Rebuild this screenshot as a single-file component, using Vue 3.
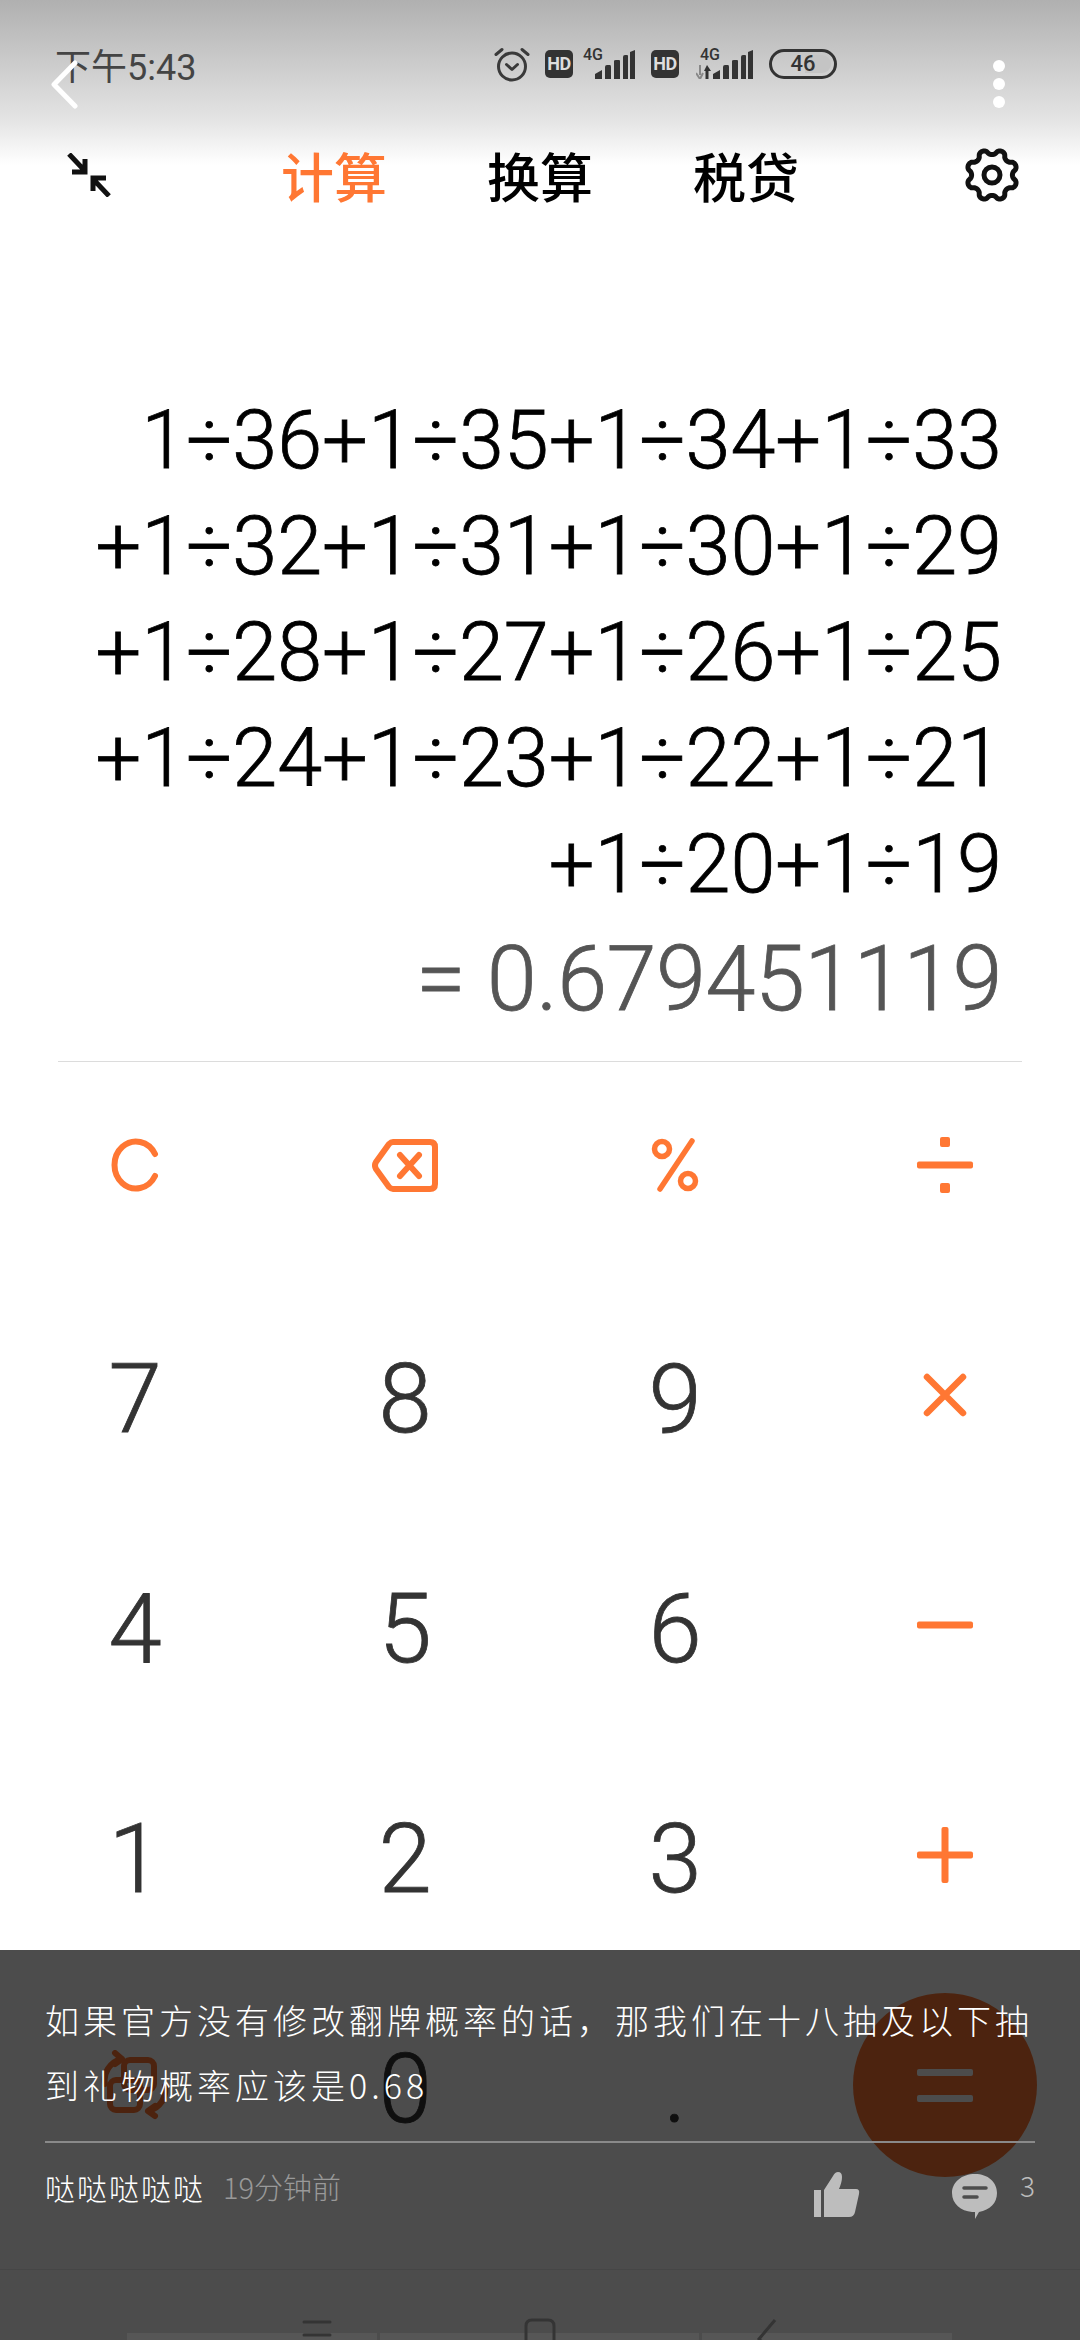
<script setup>
const lines = [
  "1÷36+1÷35+1÷34+1÷33",
  "+1÷32+1÷31+1÷30+1÷29",
  "+1÷28+1÷27+1÷26+1÷25",
  "+1÷24+1÷23+1÷22+1÷21",
  "+1÷20+1÷19",
];

const tabs = [
  { name: "计算", active: true },
  { name: "换算", active: false },
  { name: "税贷", active: false },
];

// 8 lobes, a dip straight up at the top
function gearPath() {
  const pts = [];
  for (let i = 0; i < 160; i++) {
    const a = (i / 160) * Math.PI * 2;
    const c = -Math.cos(8 * a);
    const r = 23 + 2.6 * Math.sign(c) * Math.pow(Math.abs(c), 0.6);
    pts.push((30 + r * Math.cos(a)).toFixed(2) + " " + (30 + r * Math.sin(a)).toFixed(2));
  }
  return "M" + pts.join("L") + "Z";
}
const gear = gearPath();
</script>

<template>
  <div class="phone">
    <div class="top">
      <div class="status">
        <span class="time">下午5:43</span>
        <div class="status__icons">
          <svg class="alarm" width="36" height="35" viewBox="0 0 36 35" fill="none" stroke="#3a3a3a" stroke-width="3" stroke-linecap="round" stroke-linejoin="round">
            <circle cx="18" cy="19.5" r="13.5" />
            <path d="M12.5 17.5 18 22.5l5.5-5M2 7.5 8 2.5M34 7.5 28 2.5" />
          </svg>
          <span class="hd">HD</span>
          <div class="net">
            <span class="net__g">4G</span>
            <svg width="40" height="29" viewBox="0 0 40 29" fill="#333">
              <path d="M0 29V24L7 20V29ZM10 29V17Q10 15 12 15H15Q16 15 16 17V29ZM19 29V11Q19 10 21 10H24Q25 10 25 11V29ZM28 29V7Q28 5 30 5H32Q33 5 33 6V29ZM35 29V2L40 0V29Z" />
            </svg>
          </div>
          <span class="hd hd--two">HD</span>
          <div class="net net--two">
            <span class="net__g">4G</span>
            <svg class="net__arrows" width="15" height="14" viewBox="0 0 15 14">
              <path d="M4 0V10M0 8 4 14 7 8" stroke="#888" stroke-width="2" fill="none" />
              <path d="M11 14V4" stroke="#333" stroke-width="3" fill="none" />
              <path d="M8 6 11 0 15 6Z" fill="#333" />
            </svg>
            <svg width="40" height="29" viewBox="0 0 40 29" fill="#333">
              <path d="M0 29V24L7 20V29ZM10 29V17Q10 15 12 15H15Q16 15 16 17V29ZM19 29V11Q19 10 21 10H24Q25 10 25 11V29ZM28 29V7Q28 5 30 5H32Q33 5 33 6V29ZM35 29V2L40 0V29Z" />
            </svg>
          </div>
          <div class="battery">
            <div class="battery__fill"></div>
            <span class="battery__num">46</span>
          </div>
        </div>
      </div>

      <div class="tabbar">
        <svg class="collapse" width="44" height="44" viewBox="0 0 44 44" fill="none" stroke="#111" stroke-width="5">
          <path d="M2 1 18 18M18 6V19H5" />
          <path d="M42 43 26 26M26 38V25H39" />
        </svg>
        <div class="tabs">
          <span v-for="t in tabs" :key="t.name" class="tab" :class="{ 'tab--on': t.active }">{{ t.name }}</span>
        </div>
        <svg class="gear" width="60" height="60" viewBox="0 0 60 60" fill="none" stroke="#111" stroke-width="5">
          <path :d="gear" stroke-linejoin="round" />
          <circle cx="30" cy="30" r="8" />
        </svg>
      </div>

      <svg class="back" width="29" height="49" viewBox="0 0 29 49" fill="none" stroke="#fff" stroke-width="5" stroke-linecap="round" stroke-linejoin="round">
        <path d="M25 3 4 24.500 25 46" />
      </svg>
      <div class="more"><i></i><i></i><i></i></div>
    </div>

    <div class="expr">
      <p v-for="l in lines" :key="l" class="expr__line">{{ l }}</p>
      <p class="expr__result">= 0.679451119</p>
    </div>
    <div class="rule"></div>

    <div class="keys">
      <div class="key">
        <svg width="50" height="54" viewBox="0 0 50 54" fill="none" stroke="#ff7733" stroke-width="6" stroke-linecap="round">
          <path d="M45 16A21.500 23.500 0 1 0 45 38" />
        </svg>
      </div>
      <div class="key">
        <svg width="66" height="53" viewBox="0 0 66 53" fill="none" stroke="#ff7733" stroke-width="6" stroke-linecap="round" stroke-linejoin="round">
          <path d="M21 3H58Q63 3 63 8V45Q63 50 58 50H21Q19 50 17 48L4 30Q2 26.500 4 23L17 5Q19 3 21 3Z" />
          <path d="M28 16 47 37M47 16 28 37" />
        </svg>
      </div>
      <div class="key">
        <svg width="48" height="54" viewBox="0 0 48 54" fill="none" stroke="#ff7733" stroke-width="5.500" stroke-linecap="round">
          <circle cx="11" cy="11" r="7.500" />
          <circle cx="37" cy="43" r="7.500" />
          <path d="M41 3 9 51" />
        </svg>
      </div>
      <div class="key">
        <svg width="58" height="58" viewBox="0 0 58 58" fill="#ff7733">
          <rect x="1" y="25.500" width="56" height="7" rx="2" />
          <rect x="24" y="1" width="10" height="10" rx="2" />
          <rect x="24" y="47" width="10" height="10" rx="2" />
        </svg>
      </div>

      <div class="key key--num">7</div>
      <div class="key key--num">8</div>
      <div class="key key--num">9</div>
      <div class="key">
        <svg width="44" height="44" viewBox="0 0 44 44" fill="none" stroke="#ff7733" stroke-width="6.500" stroke-linecap="round">
          <path d="M4 4 40 40M40 4 4 40" />
        </svg>
      </div>

      <div class="key key--num">4</div>
      <div class="key key--num">5</div>
      <div class="key key--num">6</div>
      <div class="key">
        <svg width="58" height="8" viewBox="0 0 58 8" fill="#ff7733">
          <rect x="1" y="0.500" width="56" height="7" rx="2" />
        </svg>
      </div>

      <div class="key key--num">1</div>
      <div class="key key--num">2</div>
      <div class="key key--num">3</div>
      <div class="key">
        <svg width="58" height="58" viewBox="0 0 58 58" fill="#ff7733">
          <rect x="1" y="25.500" width="56" height="7" rx="2" />
          <rect x="25.500" y="1" width="7" height="56" rx="2" />
        </svg>
      </div>

      <div class="key">
        <svg width="72" height="70" viewBox="0 0 72 70" fill="none" stroke="#ff7733" stroke-width="6" stroke-linecap="round" stroke-linejoin="round">
          <rect x="25" y="10" width="30" height="30" rx="6" />
          <rect x="11" y="30" width="30" height="30" rx="6" />
          <path d="M16 3 23 9 16 14M23 9C10 12 4 24 6 34" />
          <path d="M56 66 49 61 56 56M49 61C62 58 68 46 66 36" />
        </svg>
      </div>
      <div class="key key--num">0</div>
      <div class="key key--num key--dot">.</div>
      <div class="key">
        <div class="equals"><i></i><i></i></div>
      </div>
    </div>

    <div class="sheet">
      <div class="comment">
        <p class="comment__text">如果官方没有修改翻牌概率的话，那我们在十八抽及以下抽到礼物概率应该是0.68</p>
        <div class="comment__meta">
          <span class="comment__user">哒哒哒哒哒</span>
          <span class="comment__when">19分钟前</span>
          <svg class="thumb" width="46" height="46" viewBox="0 0 46 46" fill="#bdbdbd">
            <path d="M0 18H7V45H0ZM10 45V18L19 4Q21 0 24 0 28 0 28 5 28 10 25 17H42Q46 17 45 22L41 40Q40 45 35 45Z" />
          </svg>
          <svg class="chat" width="46" height="46" viewBox="0 0 46 46">
            <path d="M23 0C36 0 45 8 45 19 45 29 38 36 27 38L23 45V38H20C9 37 0 30 0 19 0 8 10 0 23 0Z" fill="#bdbdbd" />
            <path d="M12 14H34M12 23H25" stroke="#4d4d4d" stroke-width="3.500" stroke-linecap="round" fill="none" />
          </svg>
          <span class="comment__count">3</span>
        </div>
      </div>
      <div class="nav">
        <div class="nav__tray"><i></i><i></i><i></i></div>
        <svg class="nav__menu" width="30" height="20" viewBox="0 0 30 20" fill="none" stroke="#343434" stroke-width="3" stroke-linecap="round">
          <path d="M2 2H28M2 15H28" />
        </svg>
        <svg class="nav__home" width="32" height="24" viewBox="0 0 32 24" fill="none" stroke="#343434" stroke-width="3">
          <path d="M2 24V8Q2 2 8 2H24Q30 2 30 8V24" />
        </svg>
        <svg class="nav__back" width="20" height="24" viewBox="0 0 20 24" fill="none" stroke="#343434" stroke-width="3">
          <path d="M18 1 2 20 6 24" />
        </svg>
      </div>
    </div>
  </div>
</template>

<style>
html,
body {
  margin: 0;
  background: #fff;
}
</style>

<style scoped>
.phone {
  position: relative;
  width: 1080px;
  height: 2340px;
  overflow: hidden;
  background: #fff;
  font-family: Roboto, "Noto Sans CJK SC", sans-serif;
}
.top {
  position: relative;
  height: 236px;
  background: linear-gradient(#b0b0b0, #e4e4e4 120px, #fff 165px);
}
.status {
  display: flex;
  align-items: center;
  height: 34px;
  padding: 47px 243px 0 55px;
}
.time {
  font-size: 36px;
  font-weight: 400;
  color: #444;
}
.status__icons {
  display: flex;
  align-items: center;
  margin-left: auto;
}
.hd {
  width: 28px;
  height: 28px;
  margin-left: 15px;
  border-radius: 5px;
  background: #333;
  color: #ddd;
  font-size: 18px;
  font-weight: 700;
  line-height: 28px;
  text-align: center;
  letter-spacing: -0.5px;
}
.hd--two {
  margin-left: 16px;
}
.net {
  position: relative;
  width: 62px;
  height: 30px;
  display: flex;
  justify-content: flex-end;
  align-items: flex-end;
}
.net--two {
  width: 74px;
}
.net__g {
  position: absolute;
  left: 10px;
  top: -4px;
  font-size: 16px;
  font-weight: 500;
  color: #333;
}
.net--two .net__g {
  left: 21px;
}
.net__arrows {
  position: absolute;
  left: 17px;
  bottom: 0;
}
.battery {
  position: relative;
  width: 68px;
  height: 30px;
  margin-left: 16px;
  box-sizing: border-box;
  border: 3px solid #333;
  border-radius: 15px;
  overflow: hidden;
  text-align: center;
}
.battery__fill {
  position: absolute;
  top: 3px;
  bottom: 3px;
  right: 3px;
  width: 26px;
  border-radius: 0 9px 9px 0;
  background: #c4c4c4;
}
.battery__num {
  position: relative;
  font-size: 22px;
  font-weight: 500;
  line-height: 24px;
  color: #333;
  display: block;
}
.tabbar {
  display: grid;
  grid-template-columns: 1fr auto 1fr;
  align-items: center;
  margin-top: 64px;
  height: 54px;
  padding: 0 58px;
}
.collapse {
  margin-left: 9px;
}
.gear {
  justify-self: end;
}
.tabs {
  display: flex;
  gap: 100px;
}
.tab {
  font-family: "Noto Sans CJK SC", sans-serif;
  font-size: 53px;
  font-weight: 500;
  line-height: 54px;
  color: #000;
}
.tab--on {
  color: #ff7733;
}
.back {
  position: absolute;
  left: 50px;
  top: 60px;
}
.more {
  position: absolute;
  left: 993px;
  top: 60px;
  display: flex;
  flex-direction: column;
  gap: 6px;
}
.more i {
  width: 12px;
  height: 12px;
  border-radius: 50%;
  background: #fff;
}
.expr {
  box-sizing: border-box;
  display: flex;
  flex-direction: column;
  justify-content: flex-end;
  height: 825px;
  padding: 0 78px 19px 0;
  text-align: right;
  color: #000;
}
.expr__line {
  margin: 0;
  font-size: 81px;
  font-weight: 300;
  -webkit-text-stroke: 0.8px #000;
  line-height: 106px;
}
.expr__result {
  margin: 0;
  font-size: 90px;
  font-weight: 300;
  -webkit-text-stroke: 0.8px #555;
  line-height: 124px;
  letter-spacing: -0.5px;
  color: #555;
}
.rule {
  height: 1px;
  margin: 0 58px;
  background: #dcdcdc;
}
.keys {
  display: grid;
  grid-template-columns: repeat(4, 270px);
  grid-auto-rows: 184px;
  row-gap: 46px;
  padding-top: 11px;
}
.key {
  display: flex;
  align-items: center;
  justify-content: center;
}
.key--num {
  padding-top: 8px;
  box-sizing: border-box;
  font-size: 96px;
  font-weight: 300;
  -webkit-text-stroke: 0.8px #333;
  color: #333;
}
.equals {
  display: flex;
  flex-direction: column;
  align-items: center;
  justify-content: center;
  gap: 19px;
  width: 184px;
  height: 184px;
  border-radius: 50%;
  background: #ff7733;
}
.equals i {
  width: 56px;
  height: 7px;
  border-radius: 2px;
  background: #fff;
}
.sheet {
  position: absolute;
  left: 0;
  right: 0;
  top: 1950px;
  bottom: 0;
  display: flex;
  flex-direction: column;
  background: rgba(0, 0, 0, 0.7);
}
.comment {
  flex: 1;
  padding: 37px 45px 0;
  box-sizing: border-box;
}
.comment__text {
  margin: 0;
  padding-bottom: 24px;
  font-family: "Noto Sans CJK SC", sans-serif;
  font-size: 34px;
  font-weight: 300;
  line-height: 65px;
  letter-spacing: 4px;
  color: #fff;
  border-bottom: 2px solid #8a8a8a;
}
.comment__meta {
  display: flex;
  align-items: flex-start;
  margin-top: 22px;
  font-family: "Noto Sans CJK SC", sans-serif;
}
.comment__user {
  font-size: 30px;
  font-weight: 300;
  letter-spacing: 2px;
  color: #fff;
}
.comment__when {
  margin-left: 18px;
  font-size: 29px;
  font-weight: 300;
  color: #999;
}
.thumb {
  margin-left: auto;
  margin-top: 7px;
}
.chat {
  margin-left: 92px;
  margin-top: 9px;
}
.comment__count {
  margin-left: 22px;
  font-size: 28px;
  font-weight: 300;
  color: #bdbdbd;
}
.nav {
  position: relative;
  height: 70px;
  border-top: 1px solid #464646;
  overflow: hidden;
}
.nav__tray {
  position: absolute;
  left: 127px;
  bottom: 0;
  display: flex;
  gap: 3px;
  height: 7px;
}
.nav__tray i {
  background: #565656;
  width: 250px;
}
.nav__tray i:nth-child(2) {
  width: 319px;
}
.nav__menu {
  position: absolute;
  left: 302px;
  top: 50px;
}
.nav__home {
  position: absolute;
  left: 524px;
  top: 48px;
}
.nav__back {
  position: absolute;
  left: 757px;
  top: 49px;
}
</style>
